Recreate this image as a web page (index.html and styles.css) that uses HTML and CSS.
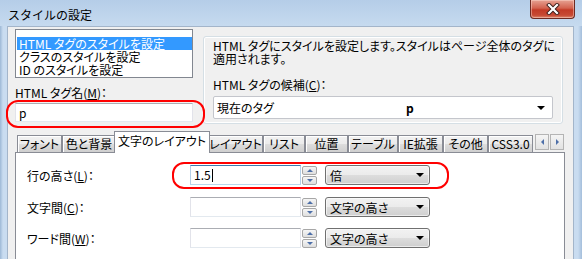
FILE: index.html
```html
<!DOCTYPE html>
<html lang="ja">
<head>
  <meta charset="UTF-8">
  <title>スタイルの設定</title>
  <link rel="stylesheet" href="styles.css">
</head>
<body>
<div class="Window">
  <div class="Window__Title">
    <span class="Window__TitleText">スタイルの設定</span>
    <div class="Window__Close">
      <svg width="14" height="12" viewBox="0 0 14 12">
        <path d="M3 2 L11 10 M11 2 L3 10" stroke="#3b1d1a" stroke-width="4" stroke-linecap="square"/>
        <path d="M3 2 L11 10 M11 2 L3 10" stroke="#ffffff" stroke-width="2.2" stroke-linecap="square"/>
      </svg>
    </div>
  </div>
  <div class="Window__Frame">
    <div class="Window__Client">
      <!-- Upper half: style kind list, tag name and the help text -->
      <div class="Top">
        <div class="Top__Left">
          <div class="ListBox">
            <div class="ListBox__Item ListBox__Item--Selected">HTML タグのスタイルを設定</div>
            <div class="ListBox__Item">クラスのスタイルを設定</div>
            <div class="ListBox__Item">ID のスタイルを設定</div>
          </div>
          <div class="Label Label--TagName">HTML タグ名(<u>M</u>)：</div>
          <div class="Marked">
            <div class="TextBox TextBox--TagName">p</div>
            <div class="Marked__Ring Marked__Ring--TagName"></div>
          </div>
        </div>
        <div class="GroupBox">
          <div class="GroupBox__Line">HTML タグにスタイルを設定します。スタイルはページ全体のタグに</div>
          <div class="GroupBox__Line">適用されます。</div>
          <div class="Label Label--Candidate">HTML タグの候補(<u>C</u>)：</div>
          <div class="TagCombo">
            <span class="TagCombo__Name">現在のタグ</span>
            <span class="TagCombo__Value">p</span>
            <span class="Arrow"></span>
          </div>
        </div>
      </div>

      <!-- Tabs -->
      <div class="Tabs">
        <div class="Tab" style="width: 45px">フォント</div>
        <div class="Tab" style="width: 54px">色と背景</div>
        <div class="Tab Tab--Selected" style="width: 96px">文字のレイアウト</div>
        <div class="Tab" style="width: 55px">レイアウト</div>
        <div class="Tab" style="width: 42px">リスト</div>
        <div class="Tab" style="width: 43px">位置</div>
        <div class="Tab" style="width: 50px">テーブル</div>
        <div class="Tab" style="width: 45px">IE拡張</div>
        <div class="Tab" style="width: 45px">その他</div>
        <div class="Tab" style="width: 45px">CSS3.0</div>
        <div class="Tabs__Scroll">
          <div class="Tabs__ScrollButton"><span class="Tabs__ScrollLeft"></span></div>
          <div class="Tabs__ScrollButton"><span class="Tabs__ScrollRight"></span></div>
        </div>
      </div>

      <div class="Panel">
        <div class="Row Row--First">
          <div class="Label">行の高さ(<u>L</u>)：</div>
          <div class="TextBox TextBox--Focused">1.5<span class="Caret"></span></div>
          <div class="Spin">
            <div class="Spin__Button"><span class="Spin__Up"></span></div>
            <div class="Spin__Button"><span class="Spin__Down"></span></div>
          </div>
          <div class="Combo">倍<span class="Arrow"></span></div>
          <div class="Marked__Ring Marked__Ring--LineHeight"></div>
        </div>
        <div class="Row">
          <div class="Label">文字間(<u>C</u>)：</div>
          <div class="TextBox"></div>
          <div class="Spin">
            <div class="Spin__Button"><span class="Spin__Up"></span></div>
            <div class="Spin__Button"><span class="Spin__Down"></span></div>
          </div>
          <div class="Combo">文字の高さ<span class="Arrow"></span></div>
        </div>
        <div class="Row">
          <div class="Label">ワード間(<u>W</u>)：</div>
          <div class="TextBox"></div>
          <div class="Spin">
            <div class="Spin__Button"><span class="Spin__Up"></span></div>
            <div class="Spin__Button"><span class="Spin__Down"></span></div>
          </div>
          <div class="Combo">文字の高さ<span class="Arrow"></span></div>
        </div>
      </div>
    </div>
  </div>
</div>
</body>
</html>
```

FILE: styles.css
```css
html, body {
  margin: 0;
  padding: 0;
}

body {
  width: 582px;
  height: 259px;
  overflow: hidden;
  font-family: "Noto Sans CJK JP", "Noto Sans", sans-serif;
  font-size: 12px;
  line-height: 13px;
  color: #000000;
  font-feature-settings: "palt";
}

u {
  text-decoration: underline;
  text-underline-offset: 1px;
}

.Window {
  height: 259px;
  display: flex;
  flex-direction: column;
}

.Window__Title {
  height: 26px;
  flex: none;
  display: flex;
  justify-content: space-between;
  align-items: flex-start;
  padding: 0 7px 0 8px;
  background: linear-gradient(#b5cde8, #c6daef);
}

.Window__TitleText {
  font-feature-settings: normal;
  line-height: 13px;
  margin-top: 8px;
}

.Window__Close {
  width: 45px;
  height: 19px;
  box-sizing: border-box;
  border: 1px solid #6d2a22;
  border-top: none;
  border-radius: 0 0 4px 4px;
  background: linear-gradient(#e6a293 0, #d3624f 45%, #c23a26 55%, #c74a34 85%, #dd8a6f 100%);
  box-shadow: inset 0 0 0 1px rgba(255, 220, 210, 0.45);
  display: flex;
  align-items: center;
  justify-content: center;
}

.Window__Frame {
  flex: 1;
  display: flex;
  padding: 0 8px 0 7px;
  background: linear-gradient(to right, #9db8d6 0, #c9dcf0 3px, #c9dcf0 calc(100% - 4px), #a4bedb 100%);
}

.Window__Client {
  flex: 1;
  display: flex;
  flex-direction: column;
  background-color: #f0f0f0;
  border: 1px solid #a3b5ca;
  border-bottom: none;
}

/* Upper half */

.Top {
  display: flex;
  gap: 10px;
  padding: 2px 10px 0 7px;
}

.Top__Left {
  width: 178px;
  display: flex;
  flex-direction: column;
}

.ListBox {
  height: 49px;
  box-sizing: border-box;
  border: 1px solid #828790;
  background-color: #ffffff;
  padding: 7px 0 0 1px;
}

.ListBox__Item {
  height: 13px;
  line-height: 13px;
  padding-left: 2px;
  white-space: nowrap;
}

.ListBox__Item--Selected {
  background-color: #3399ff;
  color: #ffffff;
}

.Label {
  white-space: nowrap;
}

.Label--TagName {
  margin-top: 8px;
}

.Marked {
  position: relative;
  margin-top: 4px;
}

.Marked__Ring {
  position: absolute;
  box-sizing: border-box;
  border: 2px solid #ff0000;
  border-radius: 12px;
  pointer-events: none;
}

.Marked__Ring--TagName {
  left: -9px;
  top: -3px;
  width: 199px;
  height: 28px;
}

.Marked__Ring--LineHeight {
  left: 145px;
  top: -3px;
  width: 277px;
  height: 27px;
}

.TextBox {
  height: 20px;
  box-sizing: border-box;
  background-color: #ffffff;
  border: 1px solid #e2e3ea;
  border-top-color: #abadb3;
  border-bottom-color: #e3e9ef;
  padding: 0 3px;
  line-height: 18px;
  display: flex;
  align-items: center;
}

.TextBox--TagName {
  height: 19px;
}

.TextBox--Focused {
  border-color: #b5cfe7;
  border-top-color: #3d7bad;
  border-bottom-color: #b7d9ed;
}

.Caret {
  width: 1px;
  height: 13px;
  margin-left: 1px;
  background-color: #000000;
}

.GroupBox {
  width: 360px;
  height: 88px;
  margin-top: 7px;
  box-sizing: border-box;
  border: 1px solid #d5dfe5;
  border-radius: 3px;
  box-shadow: inset 0 0 0 1px #ffffff;
  padding: 2px 9px 0 9px;
}

.GroupBox__Line {
  white-space: nowrap;
  height: 13px;
}

.Label--Candidate {
  margin-top: 13px;
}

.TagCombo {
  height: 23px;
  margin-top: 5px;
  box-sizing: border-box;
  border: 1px solid #c4c6cc;
  border-radius: 2px;
  background-color: #ffffff;
  display: flex;
  align-items: center;
  padding: 0 7px 0 3px;
}

.TagCombo__Name {
  width: 189px;
}

.TagCombo__Value {
  flex: 1;
  font-weight: bold;
}

.Arrow {
  width: 0;
  height: 0;
  border-left: 4px solid transparent;
  border-right: 4px solid transparent;
  border-top: 4px solid #000000;
}

/* Tabs */

.Tabs {
  display: flex;
  align-items: flex-end;
  height: 21px;
  margin: 7px 8px 0 7px;
  padding-left: 2px;
}

.Tab {
  height: 17px;
  box-sizing: border-box;
  border: 1px solid #898c95;
  border-bottom: none;
  background: linear-gradient(#f2f2f2 0, #ebebeb 50%, #dddddd 50%, #cfcfcf 100%);
  box-shadow: inset 1px 1px 0 #ffffff;
  text-align: center;
  line-height: 15px;
  white-space: nowrap;
  flex: none;
}

.Tab--Selected {
  position: relative;
  z-index: 1;
  height: 22px;
  margin: 0 -2px -1px -2px;
  background: #ffffff;
  box-shadow: none;
  line-height: 17px;
}

.Tabs__Scroll {
  margin-left: auto;
  margin-right: 1px;
  align-self: flex-start;
  margin-top: 3px;
  display: flex;
  gap: 1px;
}

.Tabs__ScrollButton {
  width: 14px;
  height: 16px;
  box-sizing: border-box;
  border: 1px solid #b4b4b4;
  background: linear-gradient(#f4f4f4, #e2e2e2);
  display: flex;
  align-items: center;
  justify-content: center;
}

.Tabs__ScrollLeft {
  border-top: 3px solid transparent;
  border-bottom: 3px solid transparent;
  border-right: 3px solid #4d6fa8;
}

.Tabs__ScrollRight {
  border-top: 3px solid transparent;
  border-bottom: 3px solid transparent;
  border-left: 3px solid #4d6fa8;
}

/* Tab page */

.Panel {
  flex: 1;
  margin: 0 8px 0 7px;
  border: 1px solid #898c95;
  border-bottom: none;
  background-color: #ffffff;
  padding: 12px 0 0 11px;
  display: flex;
  flex-direction: column;
  gap: 11px;
}

.Row {
  position: relative;
  display: flex;
  align-items: center;
  height: 20px;
}

.Row--First {
  margin-bottom: 1px;
}

.Row .Label {
  width: 163px;
}

.Row .TextBox {
  width: 111px;
}

.Spin {
  width: 15px;
  margin-left: 1px;
  display: flex;
  flex-direction: column;
  gap: 1px;
}

.Spin__Button {
  height: 9px;
  box-sizing: border-box;
  border: 1px solid #a7a7a7;
  border-radius: 2px;
  background: linear-gradient(#f6f6f6, #dedede);
  display: flex;
  align-items: center;
  justify-content: center;
}

.Spin__Up {
  border-left: 3px solid transparent;
  border-right: 3px solid transparent;
  border-bottom: 3px solid #4d6fa8;
}

.Spin__Down {
  border-left: 3px solid transparent;
  border-right: 3px solid transparent;
  border-top: 3px solid #4d6fa8;
}

.Combo {
  width: 105px;
  height: 20px;
  margin-left: 8px;
  box-sizing: border-box;
  border: 1px solid #707070;
  border-radius: 3px;
  background: linear-gradient(#f2f2f2 0, #ebebeb 50%, #dddddd 50%, #cfcfcf 100%);
  box-shadow: inset 0 0 0 1px rgba(255, 255, 255, 0.6);
  display: flex;
  align-items: center;
  justify-content: space-between;
  padding: 0 5px 0 4px;
  white-space: nowrap;
}
```
